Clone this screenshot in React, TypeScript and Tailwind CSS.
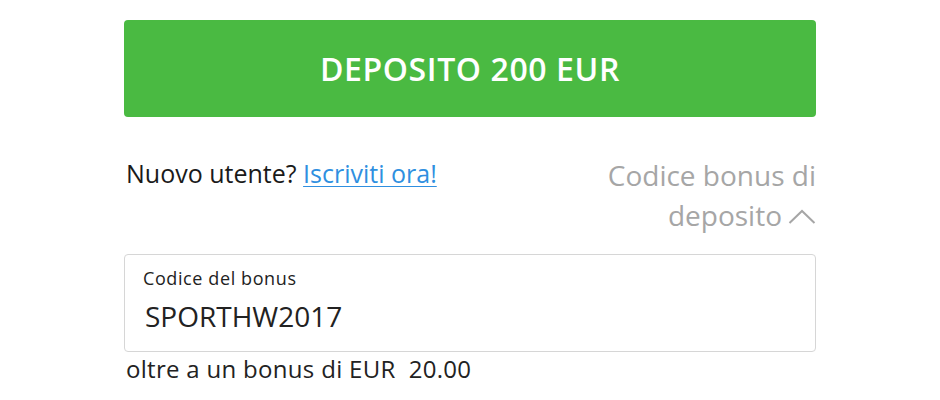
import React from "react";

export default function App() {
  return (
    <div className="w-[940px] h-[400px] bg-white overflow-hidden" style={{ fontFamily: '"Open Sans", "Noto Sans", sans-serif' }}>
      <div className="ml-[124px] w-[692px] pt-[20px]">
        <button className="w-full h-[97px] rounded-[4px] bg-[#4aba42] text-white text-[32px] font-semibold tracking-[0.6px] flex items-center justify-center">
          DEPOSITO 200 EUR
        </button>
        <div className="flex justify-between items-start mt-[36px]">
          <div className="pl-[2px] text-[25px] leading-[40px] text-[#1a1a1a]">
            Nuovo utente? <a href="#" className="text-[#2f8fe0] underline underline-offset-[3px] decoration-1">Iscriviti ora!</a>
          </div>
          <div className="mt-[2px] text-right text-[28px] leading-[40px] text-[#a6a6a6] w-[240px]">
            <div>Codice bonus di</div>
            <div className="flex items-center justify-end gap-[6px]">
              <span>deposito</span>
              <svg width="28" height="16" viewBox="0 0 28 16" fill="none" className="mt-[4px]">
                <path d="M1.5 14 L14 2 L26.5 14" stroke="#a6a6a6" strokeWidth="2" />
              </svg>
            </div>
          </div>
        </div>
        <div className="mt-[19px] h-[98px] border border-[#d6d6d6] rounded-[4px] pl-[18px] pt-[11px]">
          <div className="text-[18px] leading-[24px] tracking-[0.6px] text-[#222]">Codice del bonus</div>
          <div className="text-[28px] leading-[40px] text-[#222] pl-[2px] mt-[6px]">SPORTHW2017</div>
        </div>
        <div className="pl-[2px] mt-[2px] text-[24px] leading-[30px] tracking-[0.3px] text-[#222]">oltre a un bonus di EUR&nbsp;&nbsp;20.00</div>
      </div>
    </div>
  );
}
